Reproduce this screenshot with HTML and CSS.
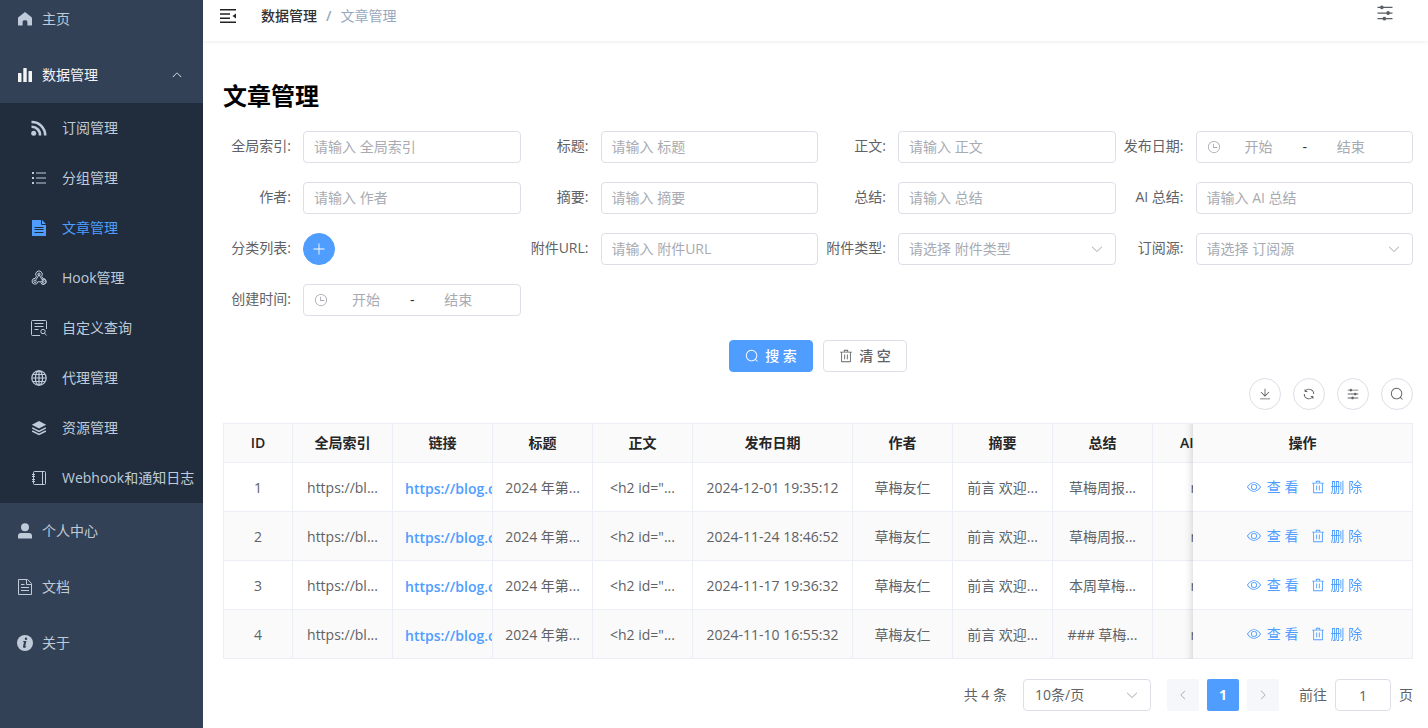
FILE: index.html
```html
<!DOCTYPE html>
<html lang="zh-CN">
<head>
<meta charset="utf-8">
<meta name="viewport" content="width=device-width, initial-scale=1">
<title>文章管理</title>
<link rel="stylesheet" href="styles.css">
</head>
<body>
<svg class="sprite" aria-hidden="true">
  <symbol id="operation" viewBox="0 0 1024 1024"><path d="M389.44 768a96.064 96.064 0 0 1 181.12 0H896v64H570.56a96.064 96.064 0 0 1-181.12 0H128v-64zm192-288a96.064 96.064 0 0 1 181.12 0H896v64H762.56a96.064 96.064 0 0 1-181.12 0H128v-64zm-320-288a96.064 96.064 0 0 1 181.12 0H896v64H442.56a96.064 96.064 0 0 1-181.12 0H128v-64z"/></symbol>
  <symbol id="search" viewBox="0 0 1024 1024"><path d="m795.904 750.72 124.992 124.928a32 32 0 0 1-45.248 45.248L750.656 795.904a416 416 0 1 1 45.248-45.248zM480 832a352 352 0 1 0 0-704 352 352 0 0 0 0 704"/></symbol>
  <symbol id="delete" viewBox="0 0 1024 1024"><path d="M160 256H96a32 32 0 0 1 0-64h256V95.936a32 32 0 0 1 32-32h256a32 32 0 0 1 32 32V192h256a32 32 0 1 1 0 64h-64v672a32 32 0 0 1-32 32H192a32 32 0 0 1-32-32zm448-64v-64H416v64zM224 896h576V256H224zm192-128a32 32 0 0 1-32-32V416a32 32 0 0 1 64 0v320a32 32 0 0 1-32 32m192 0a32 32 0 0 1-32-32V416a32 32 0 0 1 64 0v320a32 32 0 0 1-32 32"/></symbol>
  <symbol id="plus" viewBox="0 0 1024 1024"><path d="M480 480V128a32 32 0 0 1 64 0v352h352a32 32 0 1 1 0 64H544v352a32 32 0 1 1-64 0V544H128a32 32 0 0 1 0-64z"/></symbol>
  <symbol id="arrow" viewBox="0 0 1024 1024"><path d="M831.872 340.864 512 652.672 192.128 340.864a30.592 30.592 0 0 0-42.752 0 29.12 29.12 0 0 0 0 41.6L489.664 714.24a32 32 0 0 0 44.672 0l340.288-331.712a29.12 29.12 0 0 0 0-41.728 30.592 30.592 0 0 0-42.752 0z"/></symbol>
  <symbol id="view" viewBox="0 0 1024 1024"><path d="M512 160c320 0 512 352 512 352S832 864 512 864 0 512 0 512s192-352 512-352m0 64c-225.28 0-384.128 208.064-436.8 288 52.608 79.872 211.456 288 436.8 288 225.28 0 384.128-208.064 436.8-288-52.608-79.872-211.456-288-436.8-288m0 64a224 224 0 1 1 0 448 224 224 0 0 1 0-448m0 64a160.192 160.192 0 0 0-160 160c0 88.192 71.744 160 160 160s160-71.808 160-160-71.744-160-160-160"/></symbol>
  <symbol id="refresh" viewBox="0 0 1024 1024"><path d="M771.776 794.88A384 384 0 0 1 128 512h64a320 320 0 0 0 555.712 216.448H654.72a32 32 0 1 1 0-64h149.056a32 32 0 0 1 32 32v148.928a32 32 0 1 1-64 0v-50.56zM276.288 295.616h92.992a32 32 0 0 1 0 64H220.16a32 32 0 0 1-32-32V178.56a32 32 0 0 1 64 0v50.56A384 384 0 0 1 896.128 512h-64a320 320 0 0 0-555.776-216.384z"/></symbol>
  <symbol id="download" viewBox="0 0 1024 1024"><path d="M160 832h704a32 32 0 1 1 0 64H160a32 32 0 1 1 0-64m384-253.696 236.288-236.352 45.248 45.248L508.8 704 192 387.2l45.248-45.248L480 584.704V128h64z"/></symbol>
  <symbol id="clock" viewBox="0 0 1024 1024"><path d="M512 896a384 384 0 1 0 0-768 384 384 0 0 0 0 768m0 64a448 448 0 1 1 0-896 448 448 0 0 1 0 896"/><path d="M480 256a32 32 0 0 1 32 32v256a32 32 0 0 1-64 0V288a32 32 0 0 1 32-32"/><path d="M480 512h256q32 0 32 32t-32 32H480q-32 0-32-32t32-32"/></symbol>
</svg>

<div class="app">
  <aside class="sidebar">
    <nav class="menu">
      <a class="item" href="#"><svg class="icon" viewBox="0 0 16 16"><path d="M8 1 1.400 6.200Q1 6.600 1 7.200V14q0 .6.6.6h4V11q0-1.400 1.200-1.800h2.400Q10.400 9.600 10.400 11v3.600h4q.6 0 .6-.6V7.200q0-.6-.4-1z"/></svg>主页</a>
      <button class="item parent" type="button"><svg class="icon" viewBox="0 0 16 16"><path d="M1 6.500q0-.5.5-.5h2.500q.5 0 .5.5V15H1zM6.300 1.500q0-.5.5-.5h2.400q.5 0 .5.5V15H6.300zM11.500 4.500q0-.5.5-.5h2.500q.5 0 .5.5V15h-3.500z"/></svg>数据管理<svg class="caret"><use href="#arrow"/></svg></button>
      <div class="submenu">
        <a class="sub" href="#"><svg class="icon" viewBox="0 0 16 16"><circle cx="2.700" cy="13.300" r="2.500"/><path class="line bold" d="M.500 6.800A8.200 8.200 0 0 1 9 15.500M.500 2A13.300 13.300 0 0 1 14.200 15.500"/></svg>订阅管理</a>
        <a class="sub" href="#"><svg class="icon" viewBox="0 0 16 16"><path d="M1 2h2v2H1zM1 7h2v2H1zM1 12h2v2H1zM5 2.500h10v1H5zM5 7.500h10v1H5zM5 12.500h10v1H5z"/></svg>分组管理</a>
        <a class="sub active" href="#" aria-current="page"><svg class="icon" viewBox="0 0 16 16"><path fill-rule="evenodd" d="M1 .5q0-.5.500-.5H10v4q0 1 1 1h4v10.500q0 .5-.5.500h-13q-.5 0-.5-.5zM11 0l4 4h-4zM3.500 7v1h9v-1zM3.500 9v1h9v-1zM3.500 12v1h9v-1z"/></svg>文章管理</a>
        <a class="sub" href="#"><svg class="icon" viewBox="0 0 16 16"><g class="line"><path d="M5.400 6.300a3.300 3.300 0 1 1 5.200 0L12.300 9M8 4.500l3 5.200a2.600 2.600 0 1 1-.9 3.200M8 4.500 5 9.800M5.400 6.300 4.200 8.400a2.900 2.900 0 1 0 2.600 3.400H12M12.300 8.400a2.900 2.900 0 1 1-2.700 4.400"/><circle cx="8" cy="4.300" r="1.200"/><circle cx="4" cy="11.300" r="1.200"/><circle cx="12" cy="11.300" r="1.200"/></g></svg>Hook管理</a>
        <a class="sub" href="#"><svg class="icon" viewBox="0 0 16 16"><g class="line"><path d="M9 15.500H1.500q-1 0-1-1v-13q0-1 1-1h13q1 0 1 1V9M3.500 3.500h9M3.500 6.500h9M3.500 9.500h4"/><circle cx="12" cy="11.500" r="2.200"/><path d="m13.500 13.200 2 2.200"/></g></svg>自定义查询</a>
        <a class="sub" href="#"><svg class="icon" viewBox="0 0 16 16"><g class="line globe"><circle cx="8" cy="8" r="7.200"/><ellipse cx="8" cy="8" rx="3.600" ry="7.200"/><path d="M8 1v14M1 8h14M2 4.500h12M2 11.500h12"/></g></svg>代理管理</a>
        <a class="sub" href="#"><svg class="icon" viewBox="0 0 16 16"><path d="M8 1 15.200 4.700 8 8.500.800 4.700z"/><path class="line wide" d="M1.200 7.900 8 11.300l6.800-3.400M1.200 11 8 14.400l6.800-3.400"/></svg>资源管理</a>
        <a class="sub" href="#"><svg class="icon" viewBox="0 0 16 16"><path class="line" d="M3.500 1.500h10q1 0 1 1v11q0 1-1 1h-10q-1 0-1-1v-11q0-1 1-1zM11.500 2v12M1 4.500h3M1 6.500h3M1 9.500h3M1 11.500h3"/></svg>Webhook和通知日志</a>
      </div>
      <a class="item" href="#"><svg class="icon" viewBox="0 0 16 16"><circle cx="8" cy="4.300" r="4"/><path d="M1 13q0-3 3-3h8q3 0 3 3v2q0 .6-.6.600H1.600q-.6 0-.6-.6z"/></svg>个人中心</a>
      <a class="item" href="#"><svg class="icon" viewBox="0 0 16 16"><path class="line" d="M1.500.500h9L14.500 4.500v11h-13zM9.500.500v5h5M4 5.500h3.500M4 8.500h8M4 11.500h8"/></svg>文档</a>
      <a class="item" href="#"><svg class="icon" viewBox="0 0 16 16"><circle cx="8" cy="8" r="8"/><circle class="hole" cx="9" cy="3.700" r="1.200"/><path class="hole" d="M6 6h3.400L8.200 11.400q0 .5 1.300-.3-.7 1.900-2.300 1.900-1.500 0-1.200-1.400L7 7.100Q7 6.600 5.900 6.800z"/></svg>关于</a>
    </nav>
  </aside>

  <div class="page">
    <header class="topbar">
      <button class="plain" type="button" aria-label="收起菜单"><svg class="icon" viewBox="0 0 16 16"><path d="M0 1h16v1.500H0zM0 5.300h10v1.500H0zM0 9.500h10V11H0zM0 13.500h16V15H0zM16 5.500v5L12.500 8z"/></svg></button>
      <nav class="crumbs" aria-label="breadcrumb"><a href="#">数据管理</a><span class="slash">/</span><span class="here">文章管理</span></nav>
      <button class="plain settings" type="button" aria-label="设置"><svg><use href="#operation"/></svg></button>
    </header>

    <main class="content">
      <h1>文章管理</h1>
      <form>
        <div class="fields">
          <div class="field"><label for="f1">全局索引:</label><input class="box" id="f1" placeholder="请输入 全局索引"></div>
          <div class="field"><label for="f2">标题:</label><input class="box" id="f2" placeholder="请输入 标题"></div>
          <div class="field"><label for="f3">正文:</label><input class="box" id="f3" placeholder="请输入 正文"></div>
          <div class="field"><label for="f4">发布日期:</label><div class="box range"><svg><use href="#clock"/></svg><input id="f4" placeholder="开始"><span>-</span><input aria-label="发布日期 结束" placeholder="结束"></div></div>
          <div class="field"><label for="f5">作者:</label><input class="box" id="f5" placeholder="请输入 作者"></div>
          <div class="field"><label for="f6">摘要:</label><input class="box" id="f6" placeholder="请输入 摘要"></div>
          <div class="field"><label for="f7">总结:</label><input class="box" id="f7" placeholder="请输入 总结"></div>
          <div class="field"><label for="f8">AI 总结:</label><input class="box" id="f8" placeholder="请输入 AI 总结"></div>
          <div class="field"><label for="f9">分类列表:</label><button class="round primary" id="f9" type="button" aria-label="添加分类"><svg><use href="#plus"/></svg></button></div>
          <div class="field"><label for="f10">附件URL:</label><input class="box" id="f10" placeholder="请输入 附件URL"></div>
          <div class="field"><label for="f11">附件类型:</label><div class="choice"><select class="box" id="f11"><option>请选择 附件类型</option></select><svg><use href="#arrow"/></svg></div></div>
          <div class="field"><label for="f12">订阅源:</label><div class="choice"><select class="box" id="f12"><option>请选择 订阅源</option></select><svg><use href="#arrow"/></svg></div></div>
          <div class="field"><label for="f13">创建时间:</label><div class="box range"><svg><use href="#clock"/></svg><input id="f13" placeholder="开始"><span>-</span><input aria-label="创建时间 结束" placeholder="结束"></div></div>
        </div>
        <div class="actions">
          <button class="btn primary" type="button"><svg><use href="#search"/></svg>搜 索</button>
          <button class="btn" type="reset"><svg><use href="#delete"/></svg>清 空</button>
        </div>
      </form>

      <div class="tools">
        <button class="round" type="button" aria-label="下载"><svg><use href="#download"/></svg></button>
        <button class="round" type="button" aria-label="刷新"><svg><use href="#refresh"/></svg></button>
        <button class="round" type="button" aria-label="列设置"><svg><use href="#operation"/></svg></button>
        <button class="round" type="button" aria-label="搜索"><svg><use href="#search"/></svg></button>
      </div>

      <div class="table-wrap">
        <table>
          <colgroup><col class="c-id"><col class="c-text"><col class="c-text"><col class="c-text"><col class="c-text"><col class="c-date"><col class="c-text"><col class="c-text"><col class="c-text"><col class="c-text"><col class="c-ops"></colgroup>
          <thead><tr><th>ID</th><th>全局索引</th><th>链接</th><th>标题</th><th>正文</th><th>发布日期</th><th>作者</th><th>摘要</th><th>总结</th><th>AI 总结</th><th class="fixed">操作</th></tr></thead>
          <tbody>
            <tr><td>1</td><td>https://bl...</td><td class="url"><a href="#">https://blog.c</a></td><td>2024 年第...</td><td>&lt;h2 id="...</td><td>2024-12-01 19:35:12</td><td>草梅友仁</td><td>前言 欢迎...</td><td>草梅周报...</td><td>null</td><td class="fixed"><div class="ops"><button type="button"><svg><use href="#view"/></svg>查 看</button><button type="button"><svg><use href="#delete"/></svg>删 除</button></div></td></tr>
            <tr><td>2</td><td>https://bl...</td><td class="url"><a href="#">https://blog.c</a></td><td>2024 年第...</td><td>&lt;h2 id="...</td><td>2024-11-24 18:46:52</td><td>草梅友仁</td><td>前言 欢迎...</td><td>草梅周报...</td><td>null</td><td class="fixed"><div class="ops"><button type="button"><svg><use href="#view"/></svg>查 看</button><button type="button"><svg><use href="#delete"/></svg>删 除</button></div></td></tr>
            <tr><td>3</td><td>https://bl...</td><td class="url"><a href="#">https://blog.c</a></td><td>2024 年第...</td><td>&lt;h2 id="...</td><td>2024-11-17 19:36:32</td><td>草梅友仁</td><td>前言 欢迎...</td><td>本周草梅...</td><td>null</td><td class="fixed"><div class="ops"><button type="button"><svg><use href="#view"/></svg>查 看</button><button type="button"><svg><use href="#delete"/></svg>删 除</button></div></td></tr>
            <tr><td>4</td><td>https://bl...</td><td class="url"><a href="#">https://blog.c</a></td><td>2024 年第...</td><td>&lt;h2 id="...</td><td>2024-11-10 16:55:32</td><td>草梅友仁</td><td>前言 欢迎...</td><td>### 草梅...</td><td>null</td><td class="fixed"><div class="ops"><button type="button"><svg><use href="#view"/></svg>查 看</button><button type="button"><svg><use href="#delete"/></svg>删 除</button></div></td></tr>
          </tbody>
        </table>
      </div>

      <div class="pager">
        <span class="total">共 4 条</span>
        <div class="choice size"><select class="box" aria-label="每页条数"><option>10条/页</option></select><svg><use href="#arrow"/></svg></div>
        <div class="pages">
          <button type="button" disabled aria-label="上一页"><svg class="left"><use href="#arrow"/></svg></button>
          <button class="current" type="button">1</button>
          <button type="button" disabled aria-label="下一页"><svg class="right"><use href="#arrow"/></svg></button>
        </div>
        <div class="jump"><label for="go">前往</label><input class="box" id="go" value="1"><span>页</span></div>
      </div>
    </main>
  </div>
</div>
</body>
</html>
```
FILE: styles.css
```css
:root {
  --blue: #4e9dff;
  --text: #606266;
  --muted: #a8abb2;
  --border: #dcdfe6;
  --line: #ebeef5;
}
* { box-sizing: border-box; }
body {
  margin: 0;
  background: #fff;
  color: var(--text);
  font: 14px/22px "Open Sans", "Noto Sans CJK SC", sans-serif;
}
button, input, select { font: inherit; color: inherit; margin: 0; }
button { padding: 0; border: 0; background: none; cursor: pointer; }
a { color: inherit; text-decoration: none; }
svg { width: 14px; height: 14px; fill: currentColor; flex: none; display: block; }
.sprite { display: none; }
.icon { width: 16px; height: 16px; }
.line { fill: none; stroke: currentColor; stroke-width: 1; }
.globe { stroke-width: 1.2; }
.wide { stroke-width: 1.5; }
.bold { stroke-width: 2.6; }
.hole { fill: #334157; }

.app { display: flex; min-height: 100vh; }

.sidebar { width: 203px; flex: none; overflow: hidden; background: #334157; color: #bfcbd9; }
.menu { margin-top: -9px; }
.item { display: flex; align-items: center; gap: 9px; width: 100%; height: 56px; padding: 0 20px 0 17px; }
.parent { color: #f4f4f5; }
.caret { width: 12px; height: 12px; margin-left: auto; transform: rotate(180deg); }
.submenu { background: #212d3d; }
.sub { display: flex; align-items: center; gap: 15px; height: 50px; padding-left: 31px; white-space: nowrap; }
.sub.active { color: var(--blue); }

.page { flex: 1; min-width: 0; }
.topbar {
  display: flex;
  align-items: center;
  height: 41px;
  padding: 0 33px 9px 17px;
  box-shadow: 0 1px 4px rgba(0, 21, 41, 0.08);
}
.plain { color: #222; }
.settings { margin-left: auto; margin-bottom: 6px; color: #5a5e66; }
.settings svg { width: 20px; height: 20px; }
.crumbs { display: flex; margin-left: 25px; }
.crumbs a { color: #303133; font-weight: 500; }
.slash { margin: 0 9px; color: #97a8be; font-weight: 600; }
.here { color: #97a8be; }

.content { padding: 39px 15px 16px 20px; }
h1 { margin: 0 0 19px; color: #000; font-size: 24px; line-height: 32px; font-weight: 700; }

.fields { display: grid; grid-template-columns: repeat(4, 1fr); row-gap: 19px; }
.field { display: flex; }
.field > label { width: 80px; flex: none; padding-right: 12px; line-height: 30px; text-align: right; white-space: nowrap; }
.box {
  flex: 1;
  width: 100%;
  min-width: 0;
  height: 32px;
  padding: 0 10px;
  border: 1px solid var(--border);
  border-radius: 4px;
  background: #fff;
  outline: 0;
}
.field input.box { padding-bottom: 2px; }
::placeholder { color: var(--muted); opacity: 1; }
.range { display: flex; align-items: center; color: var(--muted); }
.range input { width: 39%; min-width: 0; padding: 0; border: 0; background: none; text-align: center; outline: 0; }
.range span { width: 16px; color: #303133; text-align: center; }
.choice { position: relative; flex: 1; min-width: 0; color: var(--muted); }
.choice select { display: block; appearance: none; }
.choice svg { position: absolute; right: 12px; top: 9px; pointer-events: none; }

.primary { background: var(--blue); border-color: var(--blue); color: #fff; }
.round {
  display: grid;
  place-items: center;
  width: 32px;
  height: 32px;
  border: 1px solid var(--border);
  border-radius: 50%;
}
.round.primary { border-color: var(--blue); }
.actions { display: flex; justify-content: center; gap: 10px; margin-top: 24px; }
.btn {
  display: flex;
  align-items: center;
  justify-content: center;
  gap: 6px;
  width: 84px;
  height: 32px;
  border: 1px solid var(--border);
  border-radius: 4px;
  font-weight: 500;
}
.btn.primary { border-color: var(--blue); }
.tools { display: flex; justify-content: flex-end; gap: 12px; margin: 6px 0 13px; }

.table-wrap { overflow: hidden; border: solid var(--line); border-width: 1px 0 0 1px; }
table { width: 100%; min-width: 1249px; table-layout: fixed; border-collapse: separate; border-spacing: 0; }
.c-id { width: 69px; }
.c-text { width: 100px; }
.c-date { width: 160px; }
.c-ops { width: 220px; }
th, td {
  overflow: hidden;
  padding: 0 12px;
  border: solid var(--line);
  border-width: 0 1px 1px 0;
  background: #fff;
  text-align: center;
  white-space: nowrap;
}
th { height: 39px; background: #fafafa; color: #262626; font-weight: 600; }
td { height: 49px; padding-top: 2px; }
tbody tr:nth-child(even) td { background: #fafafa; }
.url { padding-top: 4px; color: var(--blue); font-weight: 600; text-align: left; }
.fixed { position: sticky; right: 0; overflow: visible; padding-top: 0; }
.fixed::before {
  content: "";
  position: absolute;
  top: 0;
  bottom: -1px;
  left: -10px;
  width: 10px;
  box-shadow: inset -10px 0 10px -10px rgba(0, 0, 0, 0.2);
}
.ops { display: flex; justify-content: center; gap: 12px; padding-left: 4px; color: var(--blue); }
.ops button { display: flex; align-items: center; gap: 6px; }

.pager { display: flex; align-items: center; justify-content: flex-end; gap: 16px; margin-top: 20px; white-space: nowrap; }
.size { flex: none; width: 128px; }
.size select { color: var(--text); padding-left: 11px; }
.pages { display: flex; gap: 8px; }
.pages button { display: grid; place-items: center; width: 32px; height: 32px; border-radius: 2px; background: #f5f7fa; color: var(--muted); }
.pages svg { width: 12px; height: 12px; }
.pages .current { background: var(--blue); color: #fff; font-weight: 700; }
.left { transform: rotate(90deg); }
.right { transform: rotate(-90deg); }
.jump { display: flex; align-items: center; gap: 8px; margin-left: 4px; }
.jump .box { flex: none; width: 56px; text-align: center; }
```
